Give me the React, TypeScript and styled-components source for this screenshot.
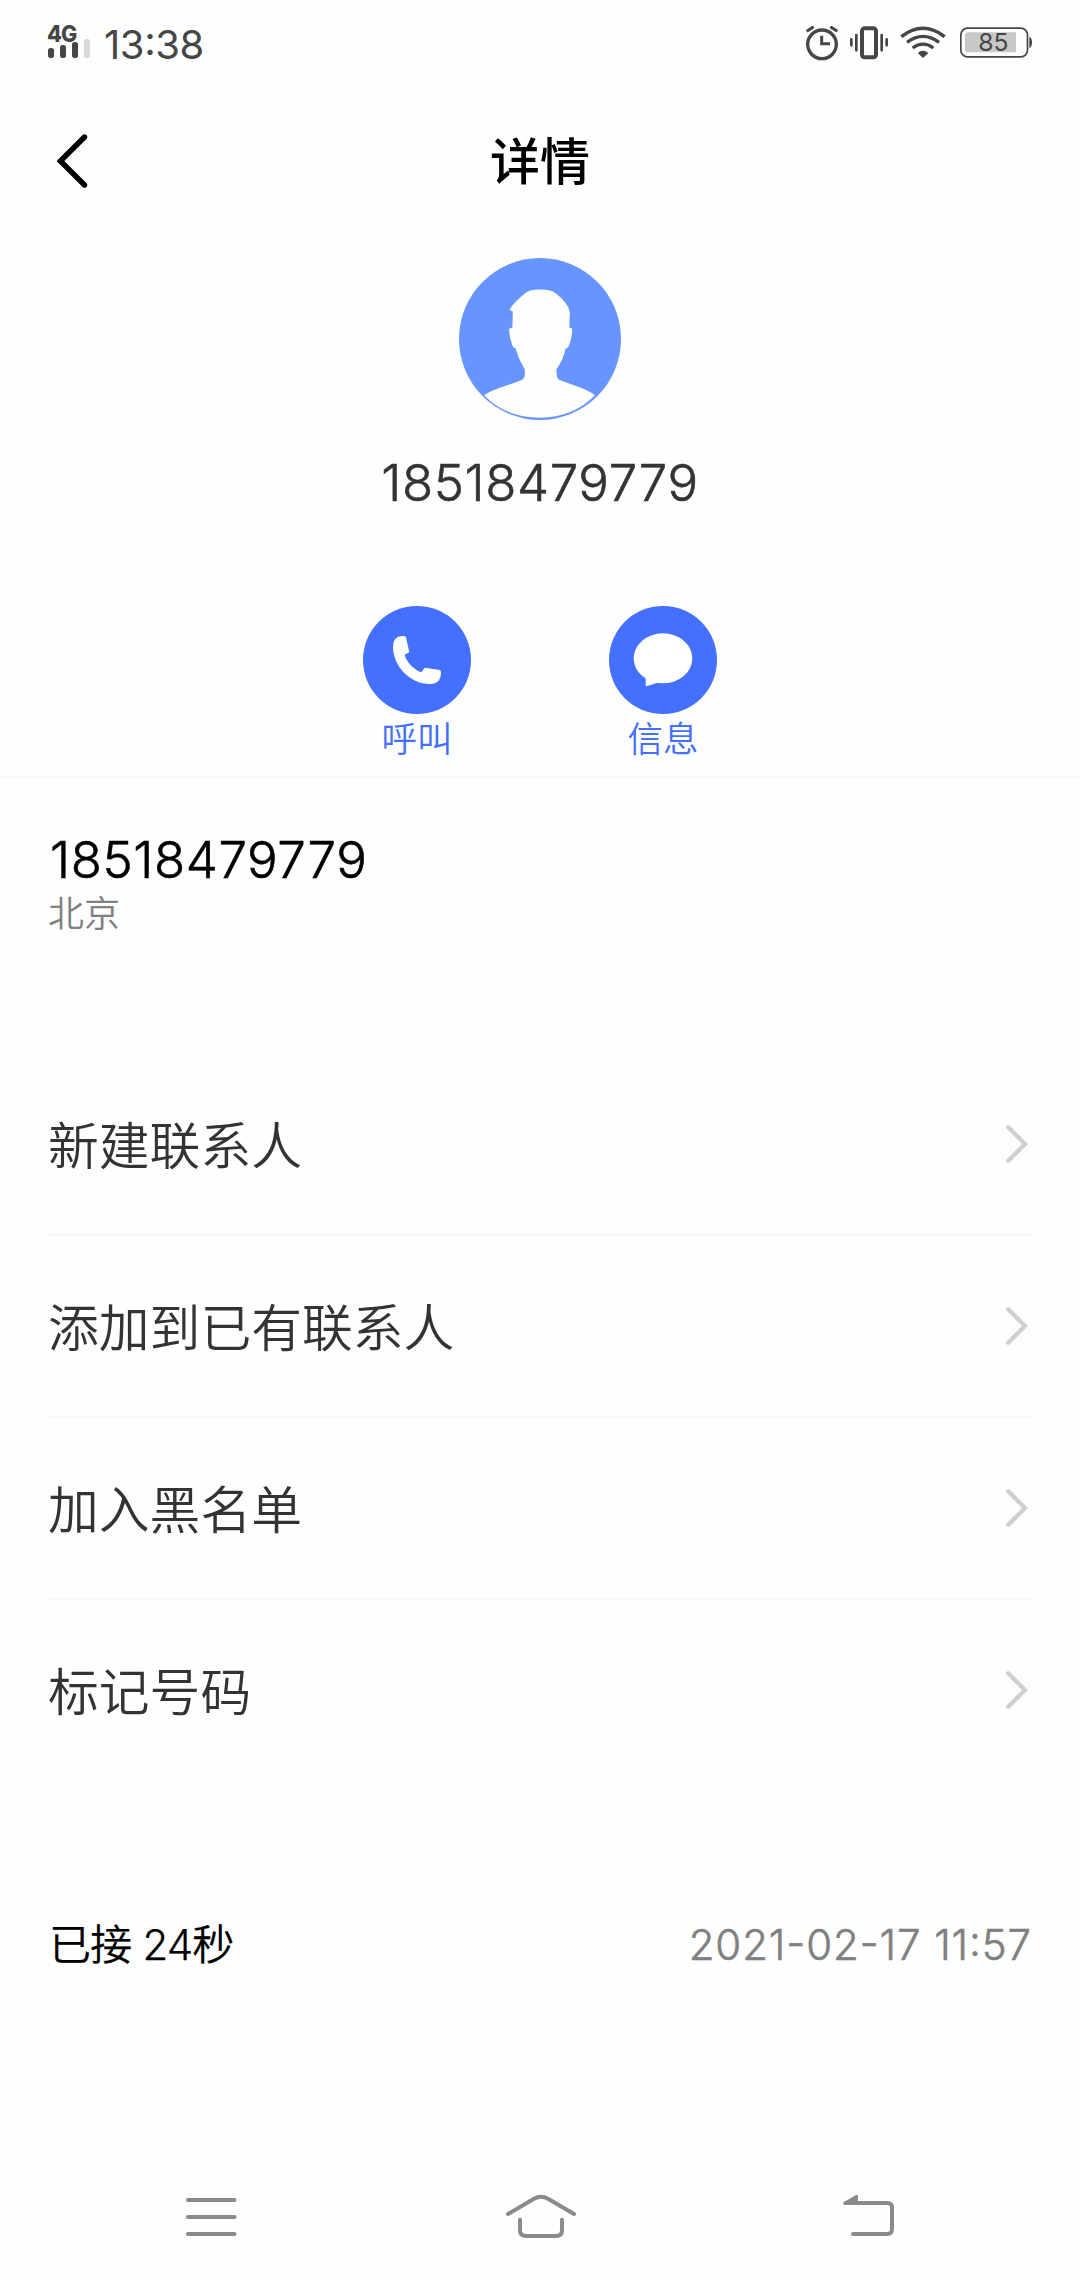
import React from "react";
import styled, { createGlobalStyle } from "styled-components";

const GlobalStyle = createGlobalStyle`
  * { box-sizing: border-box; }
  body {
    margin: 0;
    background: #fefefe;
    font-family: Inter, "Noto Sans CJK SC", sans-serif;
  }
`;

const Screen = styled.main`
  display: flex;
  flex-direction: column;
  width: 1080px;
  height: 2280px;
  background: #fefefe;
  overflow: hidden;
`;

const Glyph = styled.svg<{ $w: number; $h: number }>`
  display: block;
  flex: none;
  width: ${(p) => p.$w}px;
  height: ${(p) => p.$h}px;
`;

const StatusBar = styled.header`
  display: flex;
  justify-content: space-between;
  height: 88px;
  padding: 0 48px 0 47px;
  color: #464646;
`;

const StatusGroup = styled.div`
  display: flex;
  align-items: center;
`;

const Signal = styled.div`
  display: flex;
  flex-direction: column;
  width: 44px;
  margin-right: 13px;
  padding-bottom: 7px;
`;

const NetworkType = styled.span`
  font-size: 23.5px;
  line-height: 18px;
  font-weight: 800;
  letter-spacing: -1px;
  transform: translateY(1.5px) scaleX(0.92);
  transform-origin: left center;
`;

const Bars = styled.div`
  display: flex;
  align-items: flex-end;
  gap: 6px;
  height: 19px;
  margin-top: -2px;
  padding-left: 1px;
`;

const Bar = styled.i<{ $h: number; $dim?: boolean }>`
  width: 6px;
  height: ${(p) => p.$h}px;
  border-radius: 2.5px;
  background: ${(p) => (p.$dim ? "#d9d9d9" : "#464646")};
`;

const Clock = styled.time`
  padding-top: 2px;
  font-size: 40px;
  line-height: 88px;
  font-weight: 400;
  letter-spacing: -0.4px;
  font-feature-settings: "case";
`;

const TitleBar = styled.div`
  display: grid;
  grid-template-columns: 120px 1fr 120px;
  align-items: center;
  height: 146px;
`;

const BackButton = styled.button`
  display: flex;
  align-items: center;
  height: 146px;
  padding: 0 0 0 57px;
  border: 0;
  background: none;
`;

const Title = styled.h1`
  margin: 0;
  padding-top: 2px;
  text-align: center;
  font-size: 50px;
  line-height: 144px;
  font-weight: 500;
  color: #000;
`;

const Profile = styled.section`
  display: flex;
  flex-direction: column;
  align-items: center;
  height: 544px;
  padding-top: 24px;
  border-bottom: 2px solid #f7f7f7;
`;

const NumberText = styled.div<{ $color: string }>`
  font-size: 51px;
  line-height: 62px;
  font-weight: 300;
  letter-spacing: 0.6px;
  color: ${(p) => p.$color};
  -webkit-text-stroke: 0.6px currentColor;
`;

const ProfileNumber = styled(NumberText)`
  margin-top: 32px;
`;

const Actions = styled.div`
  display: flex;
  gap: 138px;
  margin-top: 92px;
`;

const Action = styled.div`
  display: flex;
  flex-direction: column;
  align-items: center;
  width: 108px;
`;

const ActionLabel = styled.span`
  margin-top: 3px;
  font-size: 35.5px;
  line-height: 46px;
  font-weight: 350;
  color: #456fff;
`;

const NumberBlock = styled.section`
  display: flex;
  flex-direction: column;
  height: 276px;
  padding: 51px 48px 0;
`;

const PhoneNumber = styled(NumberText)`
  padding-left: 2px;
`;

const Region = styled.div`
  font-size: 36px;
  line-height: 46px;
  font-weight: 350;
  color: #808080;
`;

const Menu = styled.ul`
  margin: 0;
  padding: 0 48px;
  list-style: none;
`;

const MenuRow = styled.li`
  display: flex;
  align-items: center;
  justify-content: space-between;
  height: 182px;
  padding-right: 4px;
  border-bottom: 2px solid #f7f7f7;
  color: #333;

  &:last-child {
    border-bottom-color: transparent;
  }
`;

const MenuLabel = styled.span`
  padding-bottom: 2px;
  font-size: 50.8px;
  font-weight: 350;
`;

const LogRow = styled.section`
  display: flex;
  align-items: center;
  justify-content: space-between;
  height: 80px;
  margin-top: 122px;
  padding: 0 48px 0 49px;
`;

const CallResult = styled.span`
  padding-bottom: 5px;
  font-size: 42px;
  font-weight: 350;
  letter-spacing: -0.8px;
  color: #000;
  -webkit-text-stroke: 0.25px currentColor;
`;

const CallTime = styled.time`
  font-size: 42px;
  font-weight: 300;
  letter-spacing: 0.9px;
  color: #808080;
  font-feature-settings: "case";
  -webkit-text-stroke: 0.6px currentColor;
`;

const NavBar = styled.nav`
  display: flex;
  align-items: center;
  justify-content: space-between;
  height: 128px;
  margin-top: auto;
  padding: 0 185px;
`;

const menuItems = ["新建联系人", "添加到已有联系人", "加入黑名单", "标记号码"];

const Avatar = () => (
  <Glyph $w={162} $h={162} viewBox="298 414 485 485">
    <circle cx="540.5" cy="656.5" r="242.5" fill="#6894ff" />
    <path
      fill="#fefefe"
      d="M373 825C398 807 456 792 485 779Q494 775 495 764V748Q477 719 467 684L460 681Q448 651 448 626L458 622L459 574L449 569Q459 550 494 521Q506 508 540 508Q576 508 588 520Q627 549 630 578L628 622L637 625Q637 654 625 681L617 686Q610 720 589 748L591 767Q592 776 601 780L640 794Q690 811 705 825Q640 892 540 892Q437 892 373 825Z"
    />
  </Glyph>
);

export default function App() {
  return (
    <>
      <GlobalStyle />
      <Screen>
        <StatusBar>
          <StatusGroup>
            <Signal>
              <NetworkType>4G</NetworkType>
              <Bars>
                <Bar $h={10} />
                <Bar $h={13} />
                <Bar $h={16} />
                <Bar $h={19} $dim />
              </Bars>
            </Signal>
            <Clock>13:38</Clock>
          </StatusGroup>
          <StatusGroup>
            <Glyph $w={226} $h={36} viewBox="78 77 678 108" fill="none" stroke="#464646">
              <circle cx="126" cy="132" r="43" strokeWidth="10" />
              <path d="M125 106V130H150M80 93L101 79M151 79L172 93" strokeWidth="9" />
              <rect x="246" y="84" width="42" height="87" rx="8" strokeWidth="12" />
              <path
                d="M229 104V150M305 104V150M214 117V135M320 117V135"
                strokeWidth="8"
                strokeLinecap="round"
              />
              <path
                d="M364 109Q429 59 494 109M381 126Q429 90 477 126M398 143Q429 120 460 143"
                strokeWidth="10"
              />
              <path d="M413 158Q429 144 445 158L429 173Z" fill="#464646" stroke="none" />
              <rect x="542.5" y="83.5" width="200" height="86" rx="20" strokeWidth="5" />
              <path d="M748 109Q756 112 756 126Q756 140 748 143Z" fill="#464646" stroke="none" />
              <path d="M563 96H708V156H563Q555 156 555 146V106Q555 96 563 96Z" fill="#c8c8c8" stroke="none" />
              <text
                x="640"
                y="153"
                fill="#464646"
                stroke="none"
                fontSize="74"
                fontFamily="Inter, sans-serif"
                textAnchor="middle"
              >
                85
              </text>
            </Glyph>
          </StatusGroup>
        </StatusBar>

        <TitleBar>
          <BackButton aria-label="返回">
            <Glyph $w={31} $h={54} viewBox="0 0 31 54">
              <path d="M27.5 3L3.4 27L27.5 51" fill="none" stroke="#000" strokeWidth="5.4" strokeLinecap="round" />
            </Glyph>
          </BackButton>
          <Title>详情</Title>
        </TitleBar>

        <Profile>
          <Avatar />
          <ProfileNumber $color="#333">18518479779</ProfileNumber>
          <Actions>
            <Action>
              <Glyph $w={108} $h={108} viewBox="69 48 324 324">
                <circle cx="231" cy="210" r="162" fill="#456fff" />
                <path
                  fill="#fff"
                  d="M187 138Q197 137 198 142L208 187L194 194C198 214 222 240 244 247L254 233L299 240Q303 241 303 247Q303 282 271 282C207 282 159 225 159 170Q159 139 187 138Z"
                />
              </Glyph>
              <ActionLabel>呼叫</ActionLabel>
            </Action>
            <Action>
              <Glyph $w={108} $h={108} viewBox="807 48 324 324">
                <circle cx="969" cy="210" r="162" fill="#456fff" />
                <ellipse cx="969" cy="205" rx="88" ry="75" fill="#fff" />
                <path d="M917 255V286Q917 290 922 288L957 277Z" fill="#fff" />
              </Glyph>
              <ActionLabel>信息</ActionLabel>
            </Action>
          </Actions>
        </Profile>

        <NumberBlock>
          <PhoneNumber $color="#000">18518479779</PhoneNumber>
          <Region>北京</Region>
        </NumberBlock>

        <Menu>
          {menuItems.map((label) => (
            <MenuRow key={label}>
              <MenuLabel>{label}</MenuLabel>
              <Glyph $w={22} $h={38} viewBox="0 0 22 38">
                <path d="M2.3 2.3L19 19L2.3 35.7" fill="none" stroke="#cfcfcf" strokeWidth="4.4" strokeLinecap="round" />
              </Glyph>
            </MenuRow>
          ))}
        </Menu>

        <LogRow>
          <CallResult>已接 24秒</CallResult>
          <CallTime>2021-02-17 11:57</CallTime>
        </LogRow>

        <NavBar>
          <Glyph $w={52} $h={42} viewBox="0 0 52 42" fill="none" stroke="#8a8a8a">
            <path d="M3 5H49.5M3 22H49.5M3 39H49.5" strokeWidth="4" strokeLinecap="round" />
          </Glyph>
          <Glyph $w={72} $h={44} viewBox="12 42 216 132" fill="none" stroke="#8a8a8a" strokeLinecap="round">
            <path d="M24 102L102 56Q123 44 144 56L222 102" strokeWidth="12" />
            <path d="M60 119V150Q60 168 78 168H168Q186 168 186 150V119" strokeWidth="12" />
          </Glyph>
          <Glyph $w={52} $h={44} viewBox="1029 42 156 132" fill="none" stroke="#8a8a8a">
            <path d="M1037 69H1162Q1176 69 1176 83V148Q1176 162 1162 162H1059" strokeWidth="12" strokeLinecap="round" />
            <path d="M1031 67L1068 45Q1074 43 1074 49V75H1035Q1027 73 1031 67Z" fill="#8a8a8a" stroke="none" />
          </Glyph>
        </NavBar>
      </Screen>
    </>
  );
}
